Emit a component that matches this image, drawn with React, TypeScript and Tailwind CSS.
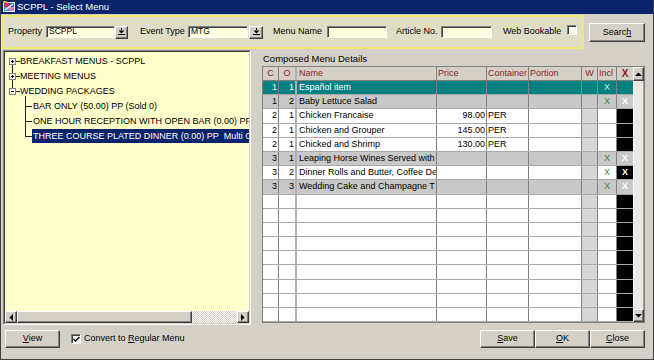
import React from "react";

const raised =
  "bg-[#d4d0c8] border border-t-white border-l-white border-r-[#404040] border-b-[#404040] shadow-[inset_-1px_-1px_0_#808080]";
const sunken =
  "border border-t-[#808080] border-l-[#808080] border-r-white border-b-white shadow-[inset_1px_1px_0_#404040]";

function TitleIcon() {
  return (
    <svg width="12" height="12" viewBox="0 0 12 12" className="shrink-0">
      <rect x="0" y="1" width="12" height="10" fill="#f4f4f4" />
      <rect x="1" y="2" width="5" height="4" fill="#d03070" />
      <rect x="6" y="2" width="5" height="4" fill="#3060c0" />
      <rect x="1" y="6" width="5" height="4" fill="#30a0d0" />
      <rect x="6" y="6" width="5" height="4" fill="#e080b0" />
      <path d="M2 9 L10 3" stroke="#ffffff" strokeWidth="1.2" />
      <rect x="0" y="0" width="4" height="2" fill="#e0a030" />
    </svg>
  );
}

function DropArrow() {
  return (
    <svg width="7" height="8" viewBox="0 0 7 8">
      <rect x="3" y="0" width="1" height="2" fill="#000" />
      <path d="M0.5 2.5 H6.5 L3.5 5.5 Z" fill="#000" />
      <rect x="0" y="6" width="7" height="1" fill="#000" />
    </svg>
  );
}

function TriLeft() {
  return (
    <svg width="4" height="7" viewBox="0 0 4 7">
      <path d="M4 0 V7 L0.5 3.5 Z" fill="#000" />
    </svg>
  );
}
function TriRight() {
  return (
    <svg width="4" height="7" viewBox="0 0 4 7">
      <path d="M0 0 V7 L3.5 3.5 Z" fill="#000" />
    </svg>
  );
}
function TriUp() {
  return (
    <svg width="7" height="4" viewBox="0 0 7 4">
      <path d="M0 4 H7 L3.5 0.5 Z" fill="#000" />
    </svg>
  );
}
function TriDown() {
  return (
    <svg width="7" height="4" viewBox="0 0 7 4">
      <path d="M0 0 H7 L3.5 3.5 Z" fill="#000" />
    </svg>
  );
}

type RowData = {
  c?: string;
  o?: string;
  name?: string;
  price?: string;
  cont?: string;
  bg: "teal" | "gray" | "white";
  incl?: boolean;
  x: "teal" | "gray" | "black";
  xMark?: boolean;
};

const rows: RowData[] = [
  { c: "1", o: "1", name: "Español item", bg: "teal", incl: true, x: "teal" },
  { c: "1", o: "2", name: "Baby Lettuce Salad", bg: "gray", incl: true, x: "gray", xMark: true },
  { c: "2", o: "1", name: "Chicken Francaise", price: "98.00", cont: "PER", bg: "white", x: "black" },
  { c: "2", o: "1", name: "Chicken and Grouper", price: "145.00", cont: "PER", bg: "white", x: "black" },
  { c: "2", o: "1", name: "Chicked and Shrimp", price: "130.00", cont: "PER", bg: "white", x: "black" },
  { c: "3", o: "1", name: "Leaping Horse Wines Served with", bg: "gray", incl: true, x: "gray", xMark: true },
  { c: "3", o: "2", name: "Dinner Rolls and Butter, Coffee De", bg: "white", incl: true, x: "black", xMark: true },
  { c: "3", o: "3", name: "Wedding Cake and Champagne T", bg: "gray", incl: true, x: "gray", xMark: true },
  ...Array.from({ length: 9 }, () => ({ bg: "white" as const, x: "black" as const })),
];

function GridRow({ r }: { r: RowData }) {
  const bg =
    r.bg === "teal" ? "bg-[#008080] text-white" : r.bg === "gray" ? "bg-[#c8c8c8] text-black" : "bg-white text-black";
  const wbg = r.bg === "white" ? "bg-[#d6d6d6]" : "";
  const xbg = r.x === "black" ? "bg-black" : r.x === "gray" ? "bg-[#c8c8c8]" : "bg-[#008080]";
  const inclColor = r.bg === "teal" ? "text-[#c8f0e0]" : "text-[#2f8a3a]";
  return (
    <div className={`flex h-[14.2px] shrink-0 border-b border-[#a8a8a8] leading-[13px] ${bg}`}>
      <div className="w-[16px] shrink-0 border-r border-[#808080] text-right pr-[1px]">{r.c}</div>
      <div className="w-[18px] shrink-0 border-r-2 border-[#b0b0b0] text-right pr-[1px]">{r.o}</div>
      <div className="w-[140px] shrink-0 border-r border-[#808080] pl-[2px] overflow-hidden whitespace-nowrap">
        {r.name}
      </div>
      <div className="w-[50px] shrink-0 border-r border-[#808080] text-right pr-[1px]">{r.price}</div>
      <div className="w-[42px] shrink-0 border-r border-[#808080] pl-[1px]">{r.cont}</div>
      <div className="w-[53px] shrink-0 border-r border-[#808080]"></div>
      <div className={`w-[16px] shrink-0 border-r border-[#808080] ${wbg}`}></div>
      <div className={`w-[19px] shrink-0 border-r border-[#808080] text-center ${inclColor}`}>
        {r.incl ? "X" : ""}
      </div>
      <div className={`w-[16px] shrink-0 text-center font-bold text-white ${xbg}`}>{r.xMark ? "X" : ""}</div>
    </div>
  );
}

function GridHeader() {
  return (
    <div className="flex h-[14px] shrink-0 border-b border-[#808080] bg-[#d4d0c8] text-[#8c1c1c] leading-[13px]">
      <div className="w-[16px] shrink-0 border-r border-[#808080] text-center">C</div>
      <div className="w-[18px] shrink-0 border-r-2 border-[#b0b0b0] text-center">O</div>
      <div className="w-[140px] shrink-0 border-r border-[#808080] pl-[2px]">Name</div>
      <div className="w-[50px] shrink-0 border-r border-[#808080] pl-[1px]">Price</div>
      <div className="w-[42px] shrink-0 border-r border-[#808080] pl-[1px] overflow-hidden whitespace-nowrap">
        Container
      </div>
      <div className="w-[53px] shrink-0 border-r border-[#808080] pl-[1px]">Portion</div>
      <div className="w-[16px] shrink-0 border-r border-[#808080] text-center">W</div>
      <div className="w-[19px] shrink-0 border-r border-[#808080] pl-[1px]">Incl</div>
      <div className="w-[16px] shrink-0 text-center font-bold text-[10px]">X</div>
    </div>
  );
}

function TreeLines() {
  const cy = (i: number) => 9 + 15 * i;
  return (
    <svg className="absolute left-0 top-0 pointer-events-none" width="30" height="100" viewBox="0 0 30 100">
      {[0, 1, 2].map((i) => (
        <g key={i}>
          <rect x="4.5" y={cy(i) - 2.5} width="6" height="6" fill="#ffffff" stroke="#808080" />
          <line x1="6" x2="9" y1={cy(i) + 0.5} y2={cy(i) + 0.5} stroke="#000" />
          {i < 2 && <line x1="7.5" x2="7.5" y1={cy(i) - 1} y2={cy(i) + 2} stroke="#000" />}
          <line x1="11" x2="15" y1={cy(i) + 0.5} y2={cy(i) + 0.5} stroke="#202020" />
          {i < 2 && <line x1="7.5" x2="7.5" y1={cy(i) + 4} y2={cy(i + 1) - 3} stroke="#202020" />}
        </g>
      ))}
      <line x1="20.5" x2="20.5" y1={cy(2) + 5} y2={cy(5) + 1} stroke="#202020" />
      {[3, 4, 5].map((i) => (
        <line key={i} x1="21" x2="27" y1={cy(i) + 0.5} y2={cy(i) + 0.5} stroke="#202020" />
      ))}
    </svg>
  );
}

export default function App() {
  return (
    <div className="w-[654px] h-[360px] bg-[#d4d0c8] flex flex-col overflow-hidden border-x border-b border-[#404040] font-['Liberation_Sans',Arial,sans-serif] text-[9px] text-black select-none">
      {/* Title bar */}
      <div className="h-[14px] shrink-0 bg-[#0a246a] flex items-center pl-[2px]">
        <TitleIcon />
        <span className="ml-[2px] text-white text-[9.5px] leading-[14px]">SCPPL - Select Menu</span>
      </div>

      {/* Filter row */}
      <div className="flex items-start mt-[1px] h-[34px] shrink-0">
        <div className="w-[583px] h-[34px] shrink-0 border-2 border-[#efeb72] bg-[#e0ddc6] flex items-center pl-[5px]">
          <span className="w-[38px] shrink-0">Property</span>
          <div className={`w-[69px] h-[12px] shrink-0 bg-[#ffffe0] ${sunken} pl-[2px] leading-[9px] text-[8.5px]`}>
            SCPPL
          </div>
          <div className={`w-[13px] h-[13px] shrink-0 flex items-center justify-center ${raised}`}>
            <DropArrow />
          </div>
          <span className="ml-[12px] w-[48px] shrink-0">Event Type</span>
          <div className={`w-[60px] h-[12px] shrink-0 bg-[#ffffe0] ${sunken} pl-[2px] leading-[9px] text-[8.5px]`}>
            MTG
          </div>
          <div className={`ml-[1px] w-[14px] h-[13px] shrink-0 flex items-center justify-center ${raised}`}>
            <DropArrow />
          </div>
          <span className="ml-[10px] w-[54px] shrink-0">Menu Name</span>
          <div className={`w-[60px] h-[12px] shrink-0 bg-[#ffffe0] ${sunken}`}></div>
          <span className="ml-[9px] w-[45px] shrink-0">Article No.</span>
          <div className={`w-[51px] h-[12px] shrink-0 bg-[#ffffe0] ${sunken}`}></div>
          <span className="ml-[11px] w-[64px] shrink-0">Web Bookable</span>
          <div className={`w-[10px] h-[10px] shrink-0 -mt-[4px] bg-[#f4f4ee] ${sunken}`}></div>
        </div>
        <div className={`ml-[5px] mt-[8px] w-[56px] h-[19px] shrink-0 flex items-center justify-center ${raised}`}>
          Searc<u>h</u>
        </div>
      </div>

      {/* Main area */}
      <div className="flex mt-[1px] h-[275px] shrink-0">
        {/* Tree panel */}
        <div className="ml-[2px] w-[248px] h-[275px] shrink-0 border border-t-[#808080] border-l-[#808080] border-r-white border-b-white">
          <div className="w-full h-full border border-t-[#404040] border-l-[#404040] border-r-[#d4d0c8] border-b-[#d4d0c8] bg-[#ffffcc] flex flex-col">
            <div className="relative flex-1 overflow-hidden">
              <TreeLines />
              <div className="pt-[2px] flex flex-col text-[9px] leading-[15px] whitespace-nowrap overflow-hidden">
                <div className="h-[15px] pl-[15px]">BREAKFAST MENUS - SCPPL</div>
                <div className="h-[15px] pl-[15px]">MEETING MENUS</div>
                <div className="h-[15px] pl-[15px]">WEDDING PACKAGES</div>
                <div className="h-[15px] pl-[28px]">BAR ONLY (50.00) PP (Sold 0)</div>
                <div className="h-[15px] pl-[28px] overflow-hidden">ONE HOUR RECEPTION WITH OPEN BAR (0.00) PP</div>
                <div className="h-[15px] pl-[27px] flex overflow-hidden">
                  <span className="flex-1 h-[14px] leading-[14px] bg-[#0a246a] text-white pl-[1px] overflow-hidden">
                    THREE COURSE PLATED DINNER (0.00) PP&nbsp;&nbsp;Multi C
                  </span>
                </div>
              </div>
            </div>
            {/* horizontal scrollbar */}
            <div className="h-[12px] shrink-0 flex">
              <div className={`w-[12px] h-[12px] shrink-0 flex items-center justify-center ${raised}`}>
                <TriLeft />
              </div>
              <div className={`w-[175px] h-[12px] shrink-0 ${raised}`}></div>
              <div className="flex-1 h-[12px] bg-[repeating-conic-gradient(#ffffff_0_25%,#d4d0c8_0_50%)] bg-[length:2px_2px]"></div>
              <div className={`w-[12px] h-[12px] shrink-0 flex items-center justify-center ${raised}`}>
                <TriRight />
              </div>
            </div>
          </div>
        </div>

        {/* Right section */}
        <div className="ml-[11px] w-[383px] flex flex-col shrink-0">
          <div className="h-[16px] shrink-0 pt-[3px] pl-[1px] leading-[11px] text-[9.5px]">Composed Menu Details</div>
          <div className="w-[383px] h-[257px] shrink-0 border border-[#808080] bg-white flex overflow-hidden">
            <div className="w-[370px] shrink-0 flex flex-col overflow-hidden">
              <GridHeader />
              {rows.map((r, i) => (
                <GridRow key={i} r={r} />
              ))}
            </div>
            <div className="w-[11px] shrink-0 flex flex-col bg-[#d4d0c8]">
              <div className={`h-[14px] shrink-0 flex items-center justify-center ${raised}`}>
                <TriUp />
              </div>
              <div className="flex-1 bg-[#ebe9e4] border-l border-[#ffffff] border-r border-r-[#a0a0a0]"></div>
              <div className={`h-[13px] shrink-0 flex items-center justify-center ${raised}`}>
                <TriDown />
              </div>
            </div>
          </div>
        </div>
      </div>

      {/* Bottom bar */}
      <div className="flex-1 flex items-start pt-[5px]">
        <div className={`ml-[4px] w-[55px] h-[18px] shrink-0 flex items-center justify-center ${raised}`}>
          <u>V</u>iew
        </div>
        <div className="ml-[11px] h-[18px] flex items-center">
          <div className="w-[10px] h-[10px] bg-white border border-t-[#808080] border-l-[#808080] border-r-white border-b-white shadow-[inset_1px_1px_0_#404040] flex items-center justify-center">
            <svg width="7" height="7" viewBox="0 0 7 7">
              <path d="M0.5 3 L2.5 5 L6.5 1" stroke="#000" strokeWidth="1.4" fill="none" />
            </svg>
          </div>
          <span className="ml-[3px]">
            Convert to <u>R</u>egular Menu
          </span>
        </div>
        <div className="ml-auto mr-[8px] flex">
          <div className={`w-[55px] h-[18px] flex items-center justify-center ${raised}`}>
            <u>S</u>ave
          </div>
          <div className={`w-[55px] h-[18px] flex items-center justify-center ${raised}`}>
            <u>O</u>K
          </div>
          <div className={`w-[55px] h-[18px] flex items-center justify-center ${raised}`}>
            <u>C</u>lose
          </div>
        </div>
      </div>
    </div>
  );
}
